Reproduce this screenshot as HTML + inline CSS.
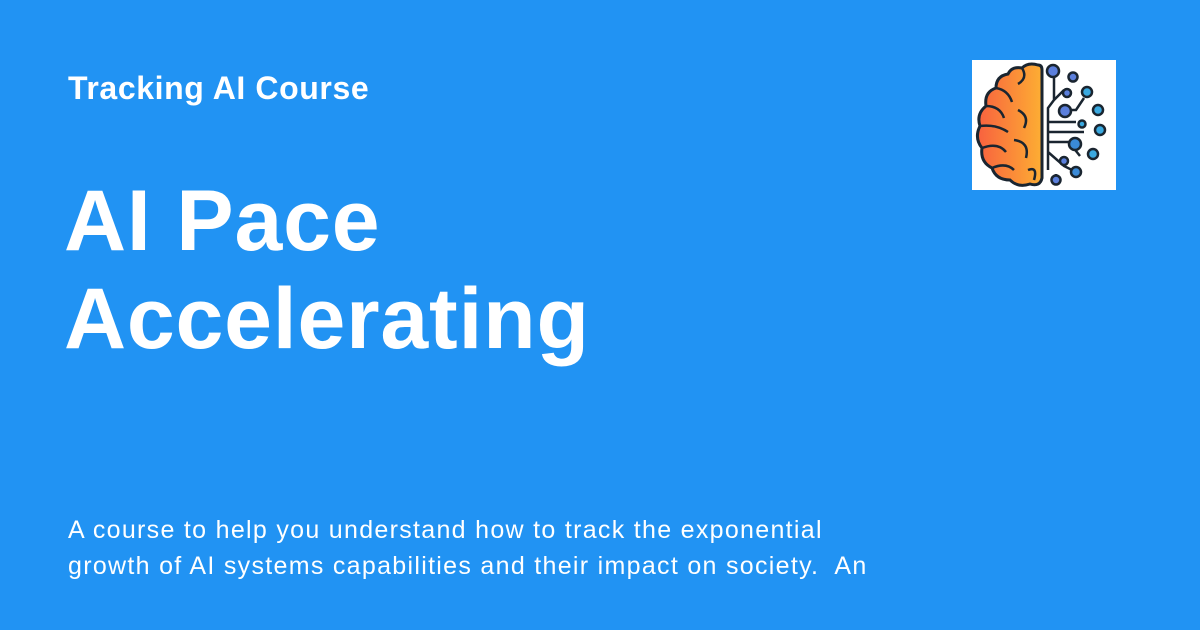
<!DOCTYPE html>
<html><head><style>
body{margin:0;width:1200px;height:630px;background:#2193f3;font-family:"Liberation Sans",sans-serif;color:#fff;position:relative;overflow:hidden}
.t{position:absolute;left:68px;top:70px;font-size:32px;font-weight:bold;letter-spacing:0.6px}
.h{position:absolute;left:64px;top:172px;font-size:86px;font-weight:bold;line-height:98px;letter-spacing:0.8px}
.d{position:absolute;left:68px;top:512px;font-size:25px;line-height:36px;width:1000px;letter-spacing:1.3px}
.logo{position:absolute;left:972px;top:60px;width:144px;height:130px;background:#fff}
</style></head><body>
<div class="t">Tracking AI Course</div>
<div class="h">AI Pace<br>Accelerating</div>
<div class="d">A course to help you understand how to track the exponential<br>growth of AI systems capabilities and their impact on society.&nbsp; An</div>
<div class="logo"><svg width="144" height="130" viewBox="0 0 144 130">
<defs><linearGradient id="g" x1="0" x2="1"><stop offset="0" stop-color="#f8613f"/><stop offset="1" stop-color="#fdae33"/></linearGradient></defs>
<path d="M66 5 Q56 2 50 8 Q40 6 36 14 Q24 16 24 28 Q12 32 14 46 Q4 54 8 66 Q2 78 10 88 Q8 102 20 108 Q24 120 38 120 Q46 128 58 124 Q68 127 70 118 L70 10 Q70 5 66 5Z" fill="url(#g)" stroke="#1a2530" stroke-width="3"/>
<g fill="none" stroke="#1a2530" stroke-width="2.5">
<path d="M50 8 Q56 18 46 24 M24 28 Q36 30 40 42 M14 46 Q28 46 32 58 M8 66 Q24 64 36 72 M46 50 Q58 56 52 68 M10 88 Q26 82 34 92 M42 80 Q58 82 54 98 M20 108 Q34 102 42 110 M56 110 Q66 106 62 120"/>
<path d="M82 18 V40 L76 48 V110 M76 62 H104 M76 72 H112 M76 82 H96 L104 88 M76 92 L92 106 L104 112 M82 40 L92 30 M90 50 H104 L112 38 M100 86 L108 96 M84 114 V122"/>
</g>
<g stroke="#1a2530" stroke-width="2.5">
<circle cx="81" cy="11" r="6" fill="#5b7fdc"/><circle cx="101" cy="17" r="4.5" fill="#5b7fdc"/><circle cx="95" cy="33" r="4" fill="#5b7fdc"/><circle cx="115" cy="32" r="5" fill="#3aa9e0"/>
<circle cx="93" cy="51" r="6" fill="#5b7fdc"/><circle cx="126" cy="50" r="5" fill="#3aa9e0"/><circle cx="110" cy="64" r="3.5" fill="#3aa9e0"/><circle cx="128" cy="70" r="5" fill="#3aa9e0"/>
<circle cx="103" cy="84" r="6" fill="#3a8ad8"/><circle cx="121" cy="94" r="5" fill="#3aa9e0"/><circle cx="92" cy="101" r="4" fill="#5b7fdc"/><circle cx="104" cy="112" r="5" fill="#3a8ad8"/><circle cx="84" cy="120" r="4.5" fill="#5b7fdc"/>
</g></svg></div>
</body></html>
